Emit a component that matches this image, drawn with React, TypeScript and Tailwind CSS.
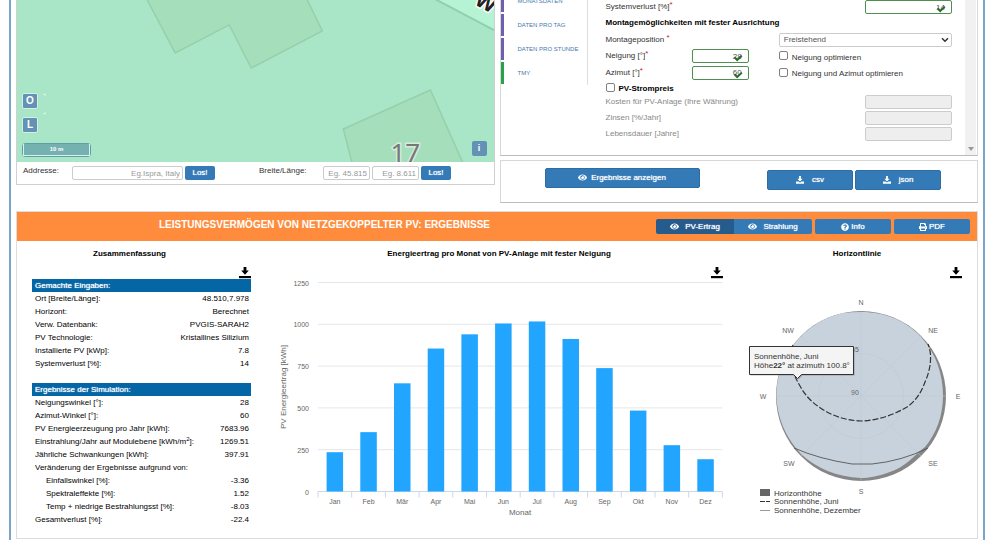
import { useId } from "react";
import type { ReactNode } from "react";
import { FaEye, FaPrint, FaQuestionCircle } from "react-icons/fa";

const TABS = [
  { label: "MONATSDATEN", bar: "bg-[#6f5fae]" },
  { label: "DATEN PRO TAG", bar: "bg-[#6f5fae]" },
  { label: "DATEN PRO STUNDE", bar: "bg-[#6f5fae]" },
  { label: "TMY", bar: "bg-[#27a34b]" },
];

const MONTHS = [
  { name: "Jan", value: 235 },
  { name: "Feb", value: 355 },
  { name: "Mär", value: 647 },
  { name: "Apr", value: 855 },
  { name: "Mai", value: 940 },
  { name: "Jun", value: 1005 },
  { name: "Jul", value: 1017 },
  { name: "Aug", value: 912 },
  { name: "Sep", value: 738 },
  { name: "Okt", value: 484 },
  { name: "Nov", value: 277 },
  { name: "Dez", value: 193 },
];

type SummaryRow = { label: ReactNode; value: string; indent?: boolean };

const INPUT_ROWS: SummaryRow[] = [
  { label: "Ort [Breite/Länge]:", value: "48.510,7.978" },
  { label: "Horizont:", value: "Berechnet" },
  { label: "Verw. Datenbank:", value: "PVGIS-SARAH2" },
  { label: "PV Technologie:", value: "Kristallines Silizium" },
  { label: "Installierte PV [kWp]:", value: "7.8" },
  { label: "Systemverlust [%]:", value: "14" },
];

const RESULT_ROWS: SummaryRow[] = [
  { label: "Neigungswinkel [°]:", value: "28" },
  { label: "Azimut-Winkel [°]:", value: "60" },
  { label: "PV Energieerzeugung pro Jahr [kWh]:", value: "7683.96" },
  {
    label: (
      <>
        Einstrahlung/Jahr auf Modulebene [kWh/m<sup className="text-[6px]">2</sup>]:
      </>
    ),
    value: "1269.51",
  },
  { label: "Jährliche Schwankungen [kWh]:", value: "397.91" },
  { label: "Veränderung der Ergebnisse aufgrund von:", value: "" },
  { label: "Einfallswinkel [%]:", value: "-3.36", indent: true },
  { label: "Spektraleffekte [%]:", value: "1.52", indent: true },
  { label: "Temp + niedrige Bestrahlungsst [%]:", value: "-8.03", indent: true },
  { label: "Gesamtverlust [%]:", value: "-22.4" },
];

const COMPASS = [
  { label: "N", x: 124, y: 41 },
  { label: "NE", x: 196, y: 69 },
  { label: "E", x: 221, y: 135 },
  { label: "SE", x: 196, y: 202 },
  { label: "S", x: 124, y: 230 },
  { label: "SW", x: 52, y: 202 },
  { label: "W", x: 26, y: 135 },
  { label: "NW", x: 51, y: 69 },
];

function DownloadIcon({ className }: { className?: string }) {
  return (
    <svg viewBox="0 0 12 12" className={className} fill="currentColor" aria-hidden="true">
      <path d="M4.600 0h2.800v3.500h2.400L6 7.800 2.200 3.500h2.400z" />
      <path d="M0 9h12v2.200H0z" />
    </svg>
  );
}

function TrayIcon({ className }: { className?: string }) {
  return (
    <svg viewBox="0 0 16 16" className={className} fill="currentColor" aria-hidden="true">
      <path d="M6.200 0h3.600v5.500h3.400L8 11 2.800 5.500h3.400z" />
      <path d="M0 11h4.800L8 13l3.200-2H16v4.500H0z" />
    </svg>
  );
}

function CheckIcon() {
  return (
    <svg viewBox="0 0 10 8" className="pointer-events-none absolute right-1.5 bottom-px h-2 w-2.5" aria-hidden="true">
      <path d="M1.500 3.200 4.200 6 8.800 1.600" fill="none" stroke="#2b6b2e" strokeWidth="2" />
    </svg>
  );
}

function Required() {
  return <span className="relative -top-0.5 text-[#c22]">*</span>;
}

function MapView() {
  return (
    <div className="relative h-[162px] overflow-hidden bg-[#a8e6c7]">
      <svg viewBox="0 0 476 162" preserveAspectRatio="xMidYMid slice" className="h-full w-full" aria-hidden="true">
        <g fill="#a5debb" stroke="#97cfaa" strokeWidth="1.500">
          <path d="M129-2 158 53l54-28 22 43 71-37-16-33z" />
          <path d="M335 164 326 129l87-39 33 74z" />
        </g>
        <path d="M404-8 480 32V-8z" fill="#b6f3d5" stroke="#8fd0ae" strokeWidth="2" />
        <path d="M26.500 94.500h2.500M26.500 113.500h2.500" stroke="#d8f5e6" strokeWidth="1.500" />
        <text x="373" y="162" fontSize="26" fill="#777" stroke="#d3ecdc" strokeWidth="3" paintOrder="stroke" fontFamily="Noto Sans">
          17
        </text>
        <text x="456" y="4" fontSize="21" fontWeight="700" fill="#222" stroke="#fff" strokeWidth="3" paintOrder="stroke" fontFamily="Noto Sans" transform="rotate(28 456 4)">
          W
        </text>
      </svg>
      <div className="absolute bottom-[5px] left-[5px] flex flex-col items-start gap-2 text-[10px] leading-none font-bold text-white">
        <button type="button" className="h-4 w-4 rounded-xs border border-[#d3f1e1] bg-[#6392b5]">
          O
        </button>
        <button type="button" className="h-4 w-4 rounded-xs border border-[#d3f1e1] bg-[#6392b5]">
          L
        </button>
        <div className="mt-0.5 rounded-sm bg-[#5e9fa6] p-px">
          <div className="h-3 w-[67px] border border-t-0 border-[#d8eef0] bg-[#76b1b2] text-center text-[6px] leading-[10px]">10 m</div>
        </div>
      </div>
      <button type="button" className="absolute right-[7px] bottom-1.5 h-[15px] w-[15px] rounded-xs bg-[#6392b5] text-[9px] leading-none font-bold text-white">
        i
      </button>
    </div>
  );
}

const BOX = "h-[14px] rounded-xs border border-[#ccc] bg-white px-0.5 text-right text-[8px] text-[#555] placeholder:text-[#999]";
const GO = "h-[14px] rounded-xs bg-[#337ab7] text-[8px] text-white [text-shadow:0_0_1px_white]";

function AddressBar() {
  return (
    <div className="flex h-[22px] items-center pl-1.5">
      <label htmlFor="address" className="w-[49px] pb-1">
        Addresse:
      </label>
      <input id="address" placeholder="Eg.Ispra, Italy" className={`${BOX} w-[111px]`} />
      <button type="button" className={`${GO} ml-0.5 w-[30px]`}>
        Los!
      </button>
      <label htmlFor="lat" className="ml-11 w-[64px] pb-1">
        Breite/Länge:
      </label>
      <input id="lat" placeholder="Eg. 45.815" className={`${BOX} w-[47px]`} />
      <input aria-label="Länge" placeholder="Eg. 8.611" className={`${BOX} ml-0.5 w-[47px]`} />
      <button type="button" className={`${GO} ml-0.5 w-[30px]`}>
        Los!
      </button>
    </div>
  );
}

function TabList() {
  return (
    <nav className="-mt-2.5 h-[95px] w-[87px] shrink-0 border-r border-[#ddd]">
      {TABS.map((tab) => (
        <a key={tab.label} href="#" className="mb-0.5 flex h-[22px] items-center gap-[14px] text-[6px] text-[#4779ad]">
          <span className={`h-full w-[3px] ${tab.bar}`} />
          {tab.label}
        </a>
      ))}
    </nav>
  );
}

function ValidInput({ id, value }: { id: string; value: string }) {
  return (
    <div className="relative">
      <input id={id} defaultValue={value} className="block h-[14px] w-full rounded-xs border border-[#4f8f50] bg-white pr-1.5 text-right text-[8px] text-[#555]" />
      <CheckIcon />
    </div>
  );
}

function Tick({ label, bold }: { label: string; bold?: boolean }) {
  const id = useId();
  return (
    <div className="flex items-center gap-1">
      <input id={id} type="checkbox" className="mb-px h-[9px] w-[9px] appearance-none rounded-xs border border-[#808080] bg-white" />
      <label htmlFor={id} className={bold ? "pt-[3px] font-bold text-black" : "pt-[3px]"}>
        {label}
      </label>
    </div>
  );
}

function CostRow({ id, label }: { id: string; label: string }) {
  return (
    <div className="flex h-4 items-center justify-between">
      <label htmlFor={id} className="text-[#888]">
        {label}
      </label>
      <input id={id} disabled className="h-[14px] w-1/4 rounded-xs border border-[#ccc] bg-[#eee]" />
    </div>
  );
}

function SystemForm() {
  return (
    <form className="mr-[13px] ml-[18px] flex-1">
      <div className="-mt-px flex h-4 items-center justify-between">
        <label htmlFor="loss">
          Systemverlust [%]
          <Required />
        </label>
        <div className="w-1/4">
          <ValidInput id="loss" value="14" />
        </div>
      </div>
      <h2 className="h-4 leading-4 font-bold text-black">Montagemöglichkeiten mit fester Ausrichtung</h2>
      <div className="flex h-[17px] items-center justify-between">
        <label htmlFor="mount">
          Montageposition <Required />
        </label>
        <div className="relative w-1/2">
          <select id="mount" className="block h-[14px] w-full appearance-none rounded-xs border border-[#ccc] bg-white px-1 text-[8px] text-[#555]">
            <option>Freistehend</option>
          </select>
          <svg viewBox="0 0 8 6" className="pointer-events-none absolute top-1 right-[3px] h-1.5 w-2" aria-hidden="true">
            <path d="M1 1.200 4 4.200 7 1.200" fill="none" stroke="#333" strokeWidth="1.500" />
          </svg>
        </div>
      </div>
      <div className="grid h-4 grid-cols-[25%_25%_50%] items-center">
        <label htmlFor="slope">
          Neigung [°]
          <Required />
        </label>
        <div className="mr-[30px]">
          <ValidInput id="slope" value="28" />
        </div>
        <Tick label="Neigung optimieren" />
      </div>
      <div className="grid h-[17px] grid-cols-[25%_25%_50%] items-center">
        <label htmlFor="azimuth">
          Azimut [°]
          <Required />
        </label>
        <div className="mr-[30px]">
          <ValidInput id="azimuth" value="60" />
        </div>
        <Tick label="Neigung und Azimut optimieren" />
      </div>
      <div className="flex h-[13px] items-center">
        <Tick label="PV-Strompreis" bold />
      </div>
      <CostRow id="cost" label="Kosten für PV-Anlage (Ihre Währung)" />
      <CostRow id="interest" label="Zinsen [%/Jahr]" />
      <CostRow id="lifetime" label="Lebensdauer [Jahre]" />
    </form>
  );
}

const ACTION = "flex h-5 items-center justify-center rounded-xs border border-[#2e6da4] bg-[#337ab7] text-white [text-shadow:0_0_1px_white]";

function ActionBar() {
  return (
    <div className="mt-1 flex h-[43px] items-center border border-[#d8d8d8] border-b-[#bbb] pr-9 pl-11">
      <button type="button" className={`${ACTION} mb-2 w-[155px] gap-1`}>
        <FaEye className="h-[9px] w-[9px]" />
        Ergebnisse anzeigen
      </button>
      <div className="mb-1 ml-auto flex gap-0.5">
        <button type="button" className={`${ACTION} w-[86px] gap-2`}>
          <TrayIcon className="h-2 w-2" />
          csv
        </button>
        <button type="button" className={`${ACTION} w-[86px] gap-2`}>
          <TrayIcon className="h-2 w-2" />
          json
        </button>
      </div>
    </div>
  );
}

function SummaryTable({ title, rows }: { title: string; rows: SummaryRow[] }) {
  return (
    <table className="w-full text-black">
      <thead>
        <tr className="h-[13px] bg-[#0566a6] text-left text-white">
          <th colSpan={2} className="px-[3px] leading-[13px] font-normal [text-shadow:0_0_1px_white]">
            {title}
          </th>
        </tr>
      </thead>
      <tbody>
        {rows.map((row) => (
          <tr key={row.value} className="h-[13px]">
            <td className={row.indent ? "pl-3.5 leading-[13px]" : "pl-[3px] leading-[13px]"}>{row.label}</td>
            <td className="pr-0.5 text-right leading-[13px]">{row.value}</td>
          </tr>
        ))}
      </tbody>
    </table>
  );
}

function MonthlyChart() {
  const left = 61;
  const step = 33.7;
  const base = 227.5;
  const scale = 209 / 1250;

  return (
    <svg viewBox="0 0 480 262" className="w-full" role="img" aria-label="Energieertrag pro Monat">
      {[0, 250, 500, 750, 1000, 1250].map((tick) => {
        const y = base - tick * scale;
        return (
          <g key={tick}>
            <path d={`M${left} ${y}h404.4`} stroke={tick === 0 ? "#ccd6eb" : "#e6e6e6"} strokeWidth="1" />
            <text x="52" y={y + 3} textAnchor="end" fontSize="7" fill="#666">
              {tick}
            </text>
          </g>
        );
      })}
      {MONTHS.map((month, i) => (
        <g key={month.name}>
          <rect x={left + step * i + 8.6} y={base - month.value * scale} width="16.5" height={month.value * scale} fill="#21a5ff" />
          <text x={left + step * (i + 0.5)} y="240" textAnchor="middle" fontSize="7" fill="#666">
            {month.name}
          </text>
        </g>
      ))}
      {Array.from({ length: 13 }, (_, i) => (
        <path key={i} d={`M${left + step * i} ${base}v6`} stroke="#ccd6eb" />
      ))}
      <text x="263" y="251" textAnchor="middle" fontSize="8" fill="#666">
        Monat
      </text>
      <text x="29" y="123" textAnchor="middle" fontSize="8" fill="#666" transform="rotate(-90 29 123)">
        PV Energieertrag [kWh]
      </text>
    </svg>
  );
}

function HorizonChart() {
  return (
    <svg viewBox="0 0 240 262" className="w-full" role="img" aria-label="Horizontlinie">
      <circle cx="124" cy="132" r="85" fill="#868686" />
      <path
        d="M124 48C150 48 171 58 185 74C199 90 206 110 206 132C206 152 199 170 188 183C178 190 170 203 150 209C140 212.500 132 214 124 214C100 213 79 204 64 190C49 174 40 154 39.400 132A85 85 0 0 1 105 49.200Q114 48 124 48Z"
        fill="#c8d2dc"
      />
      <g fill="none" stroke="#bcc7d1" strokeWidth="0.500">
        <circle cx="124" cy="132" r="42.500" />
        <path d="M124 47v170M39 132h170M64 72l120 120M184 72 64 192" />
      </g>
      <path
        d="M56 81Q52 89 55 103Q57 112 63 122Q70 135 82 143Q100 156 124 157Q148 156 170 143Q182 135 188 118Q193 107 193.500 96Q194 87 191 80"
        fill="none"
        stroke="#333"
        strokeWidth="1.200"
        strokeDasharray="6 2"
      />
      <path d="M57 184Q82 195 115 200H135Q165 197 191 184" fill="none" stroke="#555" strokeWidth="0.900" />
      <g fontSize="7" fill="#666" textAnchor="middle">
        {COMPASS.map((point) => (
          <text key={point.label} x={point.x} y={point.y}>
            {point.label}
          </text>
        ))}
        <text x="118" y="88">
          45
        </text>
        <text x="118" y="131">
          90
        </text>
      </g>
      <path d="M23 225h10v7H23z" fill="#666" />
      <path d="M23 237.500h10" stroke="#333" strokeDasharray="5 1" />
      <path d="M23 246.500h10" stroke="#999" />
      <g fontSize="8" fill="#333">
        <text x="37" y="232">
          Horizonthöhe
        </text>
        <text x="37" y="240">
          Sonnenhöhe, Juni
        </text>
        <text x="37" y="249">
          Sonnenhöhe, Dezember
        </text>
      </g>
      <path d="M12.500 82.500h104v28H64.500l-4 4-4-4h-44z" fill="#000" fillOpacity="0.250" transform="translate(1 1)" />
      <path d="M12.500 82.500h104v28H64.500l-4 4-4-4h-44z" fill="#f7f7f7" fillOpacity="0.970" stroke="#333" />
      <g fontSize="8" fill="#333">
        <text x="17" y="95">
          Sonnenhöhe, Juni
        </text>
        <text x="17" y="104">
          Höhe<tspan fontWeight="700">22°</tspan> at azimuth 100.8°
        </text>
      </g>
    </svg>
  );
}

const HEAD_BTN = "flex h-[15px] items-center justify-center text-white [text-shadow:0_0_1px_white]";

function ResultsHeader() {
  return (
    <header className="flex items-center bg-[#ff8c3d] py-[7px] pr-[7px]">
      <h1 className="flex-1 pr-6 pb-1 text-center text-[10px] leading-[11px] font-bold text-white">LEISTUNGSVERMÖGEN VON NETZGEKOPPELTER PV: ERGEBNISSE</h1>
      <div className="flex gap-[3px]">
        <div className="flex">
          <button type="button" className={`${HEAD_BTN} w-[78px] gap-1.5 rounded-l-xs bg-[#265c8d]`}>
            <FaEye className="h-[9px] w-[9px]" />
            PV-Ertrag
          </button>
          <button type="button" className={`${HEAD_BTN} w-[78px] gap-1.5 rounded-r-xs bg-[#337ab7]`}>
            <FaEye className="h-[9px] w-[9px]" />
            Strahlung
          </button>
        </div>
        <button type="button" className={`${HEAD_BTN} w-[76px] gap-0.5 rounded-xs bg-[#337ab7]`}>
          <FaQuestionCircle className="h-2 w-2" />
          Info
        </button>
        <button type="button" className={`${HEAD_BTN} w-[76px] gap-0.5 rounded-xs bg-[#337ab7]`}>
          <FaPrint className="h-2 w-2" />
          PDF
        </button>
      </div>
    </header>
  );
}

function DownloadButton({ label, className }: { label: string; className?: string }) {
  return (
    <button type="button" aria-label={label} className={className}>
      <DownloadIcon className="h-3 w-3 text-black" />
    </button>
  );
}

function Results() {
  return (
    <section className="mt-2 border border-[#ddd]">
      <ResultsHeader />
      <div className="grid grid-cols-4 pb-3">
        <div className="pr-1.5 pl-[15px]">
          <h2 className="pt-2 pr-6 text-center font-bold text-black">Zusammenfassung</h2>
          <div className="mt-2 flex justify-end">
            <DownloadButton label="Zusammenfassung herunterladen" />
          </div>
          <SummaryTable title="Gemachte Eingaben:" rows={INPUT_ROWS} />
          <div className="mt-[13px]">
            <SummaryTable title="Ergebnisse der Simulation:" rows={RESULT_ROWS} />
          </div>
        </div>
        <div className="relative col-span-2">
          <h2 className="pt-2 pb-[5px] pl-1 text-center font-bold text-black">Energieertrag pro Monat von PV-Anlage mit fester Neigung</h2>
          <DownloadButton label="Diagramm herunterladen" className="absolute top-[26px] right-3.5" />
          <MonthlyChart />
        </div>
        <div className="relative">
          <h2 className="pt-2 pb-[5px] text-center font-bold text-black">Horizontlinie</h2>
          <DownloadButton label="Horizont herunterladen" className="absolute top-[26px] right-[15px]" />
          <HorizonChart />
        </div>
      </div>
    </section>
  );
}

export default function App() {
  return (
    <div className="bg-white pr-[19px] pl-[9px] text-[8px] leading-[10px] text-[#333] [font-family:'Liberation_Sans',Arial,sans-serif]">
      <main className="min-h-screen overflow-hidden border-x-2 border-[#7ba3cc] px-[5px]">
        <div className="grid grid-cols-2 gap-[5px]">
          <section className="self-start border border-t-0 border-[#d0d0d0]">
            <MapView />
            <AddressBar />
          </section>
          <section>
            <div className="flex h-[156px] overflow-hidden border border-t-0 border-[#d8d8d8] border-b-[#bbb]">
              <TabList />
              <SystemForm />
              <div className="mr-px flex w-[11px] items-end justify-center bg-[#f1f1f1] pb-1">
                <svg viewBox="0 0 6 4" className="h-1 w-1.5" aria-hidden="true">
                  <path d="M0 0h6L3 4z" fill="#999" />
                </svg>
              </div>
            </div>
            <ActionBar />
          </section>
        </div>
        <Results />
      </main>
    </div>
  );
}
